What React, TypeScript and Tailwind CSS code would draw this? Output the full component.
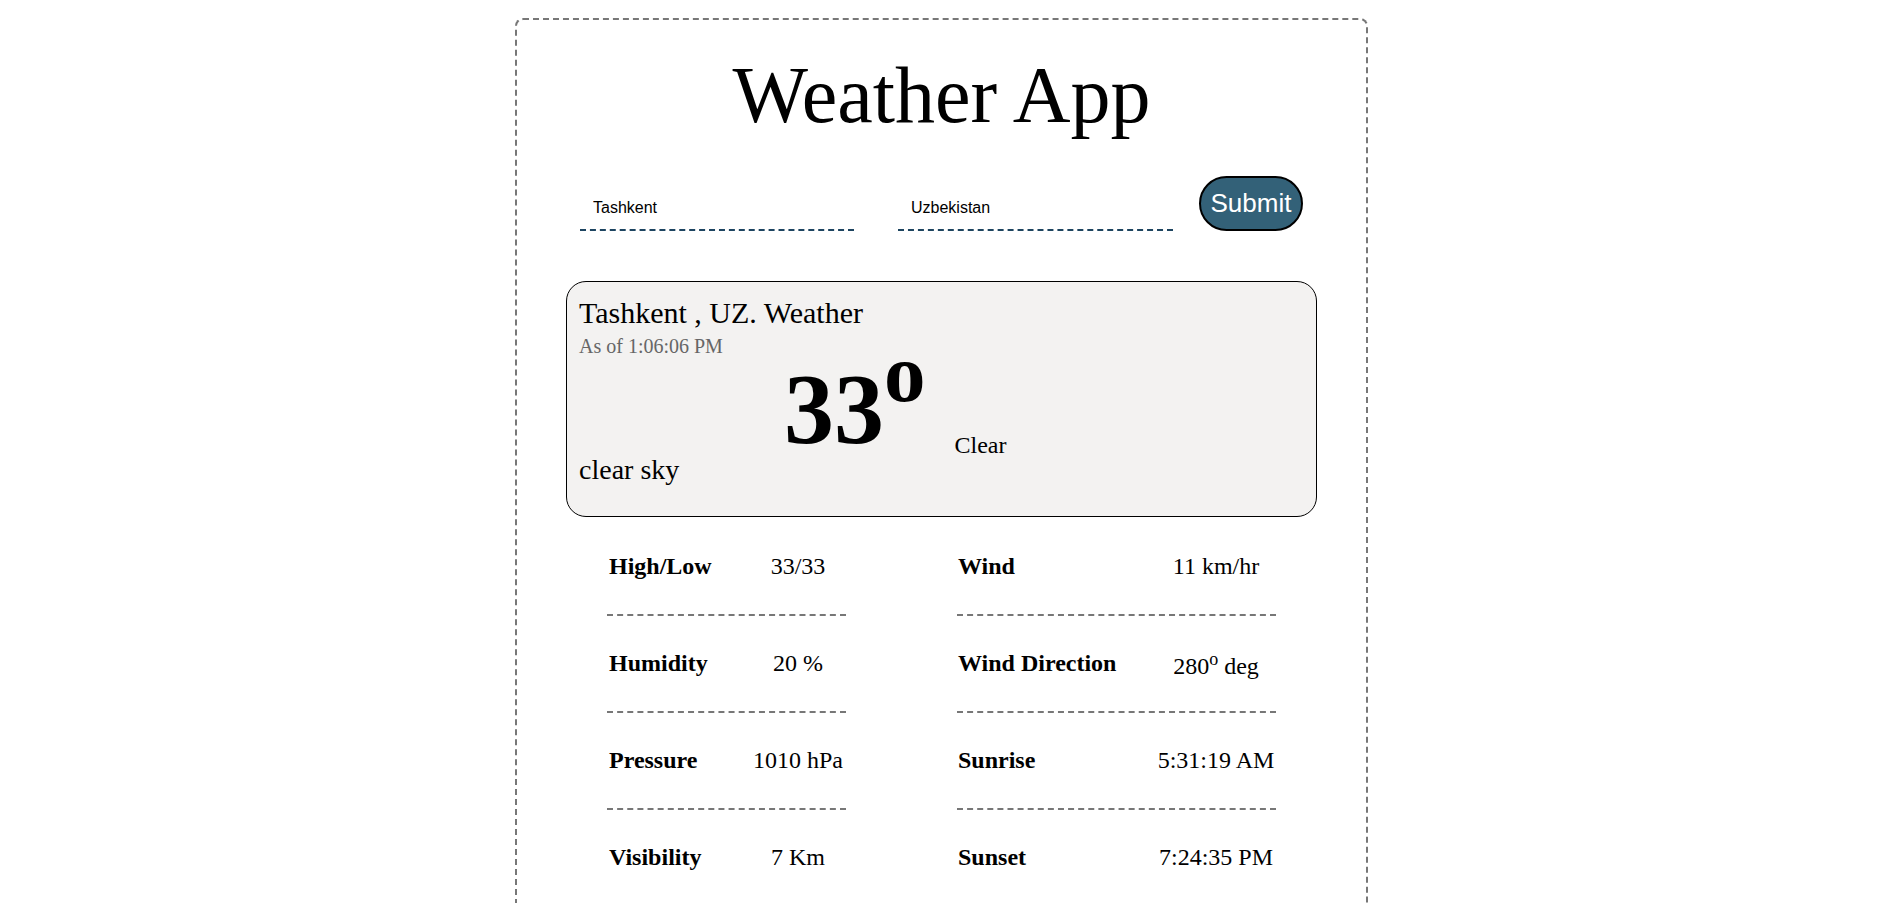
import React from 'react';

const details = [
  { left: ['High/Low', '33/33'], right: ['Wind', '11 km/hr'] },
  { left: ['Humidity', '20 %'], right: ['Wind Direction', 'deg'] },
  { left: ['Pressure', '1010 hPa'], right: ['Sunrise', '5:31:19 AM'] },
  { left: ['Visibility', '7 Km'], right: ['Sunset', '7:24:35 PM'] },
];

const serif = { fontFamily: '"Liberation Serif", "Times New Roman", serif' };

const App = () => {
  return (
    <div className="min-h-screen bg-white pl-[5px] text-black" style={serif}>
      <div className="mx-auto mt-[18px] w-[853px] rounded-[8px] border-2 border-dashed border-[#777777] pt-[31px] pb-[40px]">
        <h1 className="text-center text-[80px] leading-[88px] font-normal">Weather App</h1>

        <div className="mt-[37px] flex items-end justify-center" style={{ fontFamily: '"Liberation Sans", Arial, sans-serif' }}>
          <input
            className="h-[45px] w-[274px] border-b-2 border-dashed border-[#1d4460] bg-transparent pl-[13px] text-[16px] outline-none"
            defaultValue="Tashkent"
          />
          <input
            className="ml-[44px] h-[45px] w-[275px] border-b-2 border-dashed border-[#1d4460] bg-transparent pl-[13px] text-[16px] outline-none"
            defaultValue="Uzbekistan"
          />
          <button className="ml-[26px] h-[55px] w-[104px] rounded-full border-2 border-black bg-[#336178] text-[26px] text-white">
            Submit
          </button>
        </div>

        <div className="mx-auto mt-[50px] h-[236px] w-[751px] rounded-[20px] border border-black bg-[#f3f2f1] px-[12px] pt-[14px]">
          <div className="text-[30px] leading-[33px]">Tashkent , UZ. Weather</div>
          <div className="mt-[6px] text-[20px] leading-[22px] text-[#666666]">As of 1:06:06 PM</div>
          <div className="mt-[2px] flex items-start">
            <div className="mt-[95px] w-[205px] text-[28px] leading-[31px]">clear sky</div>
            <div className="text-[100px] leading-[100px] font-bold">
              33<sup className="text-[83px] leading-none">o</sup>
            </div>
            <div className="mt-[73px] ml-[29px] text-[24px] leading-[27px]">Clear</div>
          </div>
        </div>

        <div className="mt-[2px] flex justify-center gap-[111px] text-[24px] leading-[27px]">
          <div className="w-[239px]">
            {details.map((d) => (
              <div key={d.left[0]} className="grid grid-cols-[143px_96px] border-b-2 border-dashed border-[#777777] py-[34px]">
                <div className="pl-[2px] font-bold">{d.left[0]}</div>
                <div className="whitespace-nowrap text-center">{d.left[1]}</div>
              </div>
            ))}
          </div>
          <div className="w-[319px]">
            {details.map((d) => (
              <div key={d.right[0]} className="grid grid-cols-[199px_120px] border-b-2 border-dashed border-[#777777] py-[34px]">
                <div className="pl-[1px] font-bold">{d.right[0]}</div>
                {d.right[0] === 'Wind Direction' ? (
                  <div className="-mb-[3px] whitespace-nowrap pt-[3px] text-center">
                    280<sup className="leading-none">o</sup> {d.right[1]}
                  </div>
                ) : (
                  <div className="whitespace-nowrap text-center">{d.right[1]}</div>
                )}
              </div>
            ))}
          </div>
        </div>
      </div>
    </div>
  );
};

export default App;
